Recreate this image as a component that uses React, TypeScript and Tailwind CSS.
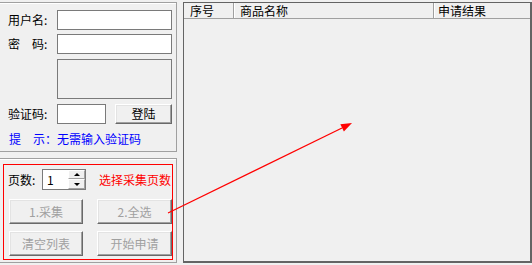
const ClassicButton = ({
  label,
  disabled,
  className,
}: {
  label: string;
  disabled?: boolean;
  className: string;
}) => (
  <div
    className={`flex items-center justify-center border border-t-white border-l-white border-r-[#696969] border-b-[#696969] bg-[#f0f0f0] shadow-[inset_-1px_-1px_0_#a0a0a0,inset_1px_1px_0_#e3e3e3] ${
      disabled ? "text-[#a0a0a0]" : "text-black"
    } ${className}`}
  >
    {label}
  </div>
);

const TextBox = ({ className }: { className: string }) => (
  <div className={`border border-[#7a7a7a] bg-white ${className}`} />
);

const Arrow = () => (
  <svg
    className="pointer-events-none absolute left-0 top-0"
    width={532}
    height={265}
    viewBox="0 0 532 265"
  >
    <line x1={168} y1={213} x2={342} y2={128} stroke="#ff0000" strokeWidth={1.2} />
    <polygon points="352,123 343.9,131.4 340.3,124.2" fill="#ff0000" />
  </svg>
);

export default function App() {
  return (
    <div className="relative flex h-[265px] w-[532px] bg-[#f0f0f0] pt-[2px] font-['SimSun','Noto_Sans_CJK_SC',sans-serif] text-[12px] leading-[14px] text-black">
      <div className="flex w-[177px] flex-col">
        {/* login group */}
        <div className="flex h-[150px] flex-col border-y border-r border-[#a0a0a0] pl-[8px] pt-[7px] shadow-[inset_0_1px_0_#fff]">
          <div className="flex h-[20px] items-center">
            <span className="w-[49px]">用户名:</span>
            <TextBox className="h-[20px] w-[115px]" />
          </div>
          <div className="mt-[4px] flex h-[20px] items-center">
            <span className="w-[49px]">密　码:</span>
            <TextBox className="h-[20px] w-[115px]" />
          </div>
          <div className="ml-[49px] mt-[5px] h-[40px] w-[115px] border border-[#7a7a7a]" />
          <div className="mt-[5px] flex h-[20px] items-center">
            <span className="w-[49px]">验证码:</span>
            <TextBox className="h-[20px] w-[49px]" />
            <ClassicButton label="登陆" className="ml-[9px] h-[20px] w-[57px]" />
          </div>
          <div className="mt-[8px] pl-[1px] text-[#0000ff]">提　示：无需输入验证码</div>
        </div>

        {/* collect group */}
        <div className="mt-[6px] h-[105px] border-y border-r border-[#a0a0a0] shadow-[inset_0_1px_0_#fff]">
          <div className="ml-[3px] mt-[5px] flex h-[96px] w-[170px] flex-col border border-[#ff0000]">
            <div className="mt-[4px] flex h-[21px] items-center">
              <span className="ml-[4px] w-[34px]">页数:</span>
              <div className="flex h-[21px] w-[44px] border border-[#7a7a7a] bg-white">
                <div className="flex w-[25px] items-center pl-[4px]">1</div>
                <div className="flex w-[17px] flex-col">
                  <div className="flex h-[9px] items-center justify-center border border-t-white border-l-white border-r-[#a0a0a0] border-b-[#a0a0a0] bg-[#f0f0f0]">
                    <div className="h-0 w-0 border-x-[3px] border-b-[3px] border-x-transparent border-b-black" />
                  </div>
                  <div className="flex h-[10px] items-center justify-center border border-t-white border-l-white border-r-[#a0a0a0] border-b-[#a0a0a0] bg-[#f0f0f0]">
                    <div className="h-0 w-0 border-x-[3px] border-t-[3px] border-x-transparent border-t-black" />
                  </div>
                </div>
              </div>
              <span className="ml-auto mr-[1px] text-[#ff0000]">选择采集页数</span>
            </div>
            <div className="mt-[9px] flex">
              <ClassicButton label="1.采集" disabled className="ml-[5px] h-[25px] w-[74px]" />
              <ClassicButton label="2.全选" disabled className="ml-[14px] h-[25px] w-[75px]" />
            </div>
            <div className="mt-[7px] flex">
              <ClassicButton label="清空列表" disabled className="ml-[5px] h-[25px] w-[74px]" />
              <ClassicButton label="开始申请" disabled className="ml-[14px] h-[25px] w-[75px]" />
            </div>
          </div>
        </div>
      </div>

      {/* result list */}
      <div className="ml-[6px] flex h-[261px] w-[349px] flex-col border border-r-2 border-b-2 border-[#646464]">
        <div className="flex h-[16px] border-b border-[#a0a0a0] leading-[16px]">
          <div className="w-[50px] border-r border-[#a0a0a0] pl-[6px] shadow-[1px_0_0_#fff]">序号</div>
          <div className="w-[200px] border-r border-[#a0a0a0] pl-[6px] shadow-[1px_0_0_#fff]">商品名称</div>
          <div className="flex-1 pl-[4px]">申请结果</div>
        </div>
        <div className="flex-1 bg-[#f0f0f0]" />
      </div>

      <Arrow />
    </div>
  );
}
